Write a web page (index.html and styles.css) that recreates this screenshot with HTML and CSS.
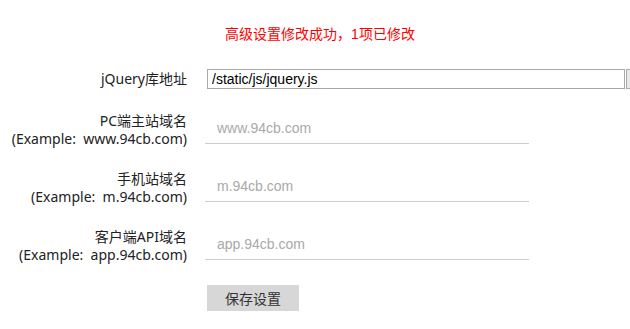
FILE: index.html
```html
<!DOCTYPE html>
<html lang="zh-CN">
<head>
    <meta charset="UTF-8">
    <meta name="viewport" content="width=device-width, initial-scale=1.0">
    <title>高级设置</title>
    <link rel="stylesheet" href="styles.css">
</head>
<body>
    <div class="notice">高级设置修改成功，1项已修改</div>

    <form class="settings-form">
        <div class="form-row single">
            <label class="form-label" for="jqueryUrl">jQuery库地址</label>
            <div class="path-field">
                <input type="text" id="jqueryUrl" class="path-input" value="/static/js/jquery.js">
                <button type="button" class="path-btn" aria-label="选择"></button>
            </div>
        </div>

        <div class="form-row">
            <label class="form-label" for="pcDomain">PC端主站域名<br>(Example:&nbsp; www.94cb.com)</label>
            <input type="text" id="pcDomain" class="line-input" placeholder="www.94cb.com">
        </div>

        <div class="form-row">
            <label class="form-label" for="mDomain">手机站域名<br>(Example:&nbsp; m.94cb.com)</label>
            <input type="text" id="mDomain" class="line-input" placeholder="m.94cb.com">
        </div>

        <div class="form-row">
            <label class="form-label" for="apiDomain">客户端API域名<br>(Example:&nbsp; app.94cb.com)</label>
            <input type="text" id="apiDomain" class="line-input" placeholder="app.94cb.com">
        </div>

        <div class="form-actions">
            <button type="submit" class="save-btn">保存设置</button>
        </div>
    </form>
</body>
</html>
```

FILE: styles.css
```css
* {
    margin: 0;
    padding: 0;
    box-sizing: border-box;
    font-family: 'Liberation Sans', 'Noto Sans CJK SC', sans-serif;
}

html, body {
    overflow: hidden;
}

body {
    background-color: #fff;
    color: #333;
    font-size: 14px;
    line-height: 18px;
}

.notice {
    color: #f00;
    text-align: center;
    padding-top: 25px;
    padding-left: 10px;
}

.settings-form {
    margin-top: 26px;
    width: 700px;
}

.form-row {
    display: flex;
    align-items: flex-start;
    margin-bottom: 22px;
}

.form-row.single {
    margin-bottom: 23px;
}

.form-label {
    width: 187px;
    flex-shrink: 0;
    text-align: right;
    color: #222;
    margin-right: 18px;
    font-family: 'Noto Sans', 'Noto Sans CJK SC', sans-serif;
}

.single .form-label {
    margin-top: 1px;
}

.path-field {
    display: flex;
    margin-left: 2px;
}

.path-input {
    width: 418px;
    height: 20px;
    border: 1px solid #a9a9a9;
    padding: 0 4px;
    font-size: 14px;
    color: #000;
    outline: none;
}

.path-btn {
    position: relative;
    width: 20px;
    height: 20px;
    margin-left: 1px;
    border: 1px solid #a9a9a9;
    background-color: #e9e9e9;
}

.path-btn::before {
    content: "";
    position: absolute;
    left: 3px;
    top: 8px;
    width: 3px;
    height: 2px;
    background-color: #444;
}

.line-input {
    width: 324px;
    height: 30px;
    margin-top: 2px;
    border: none;
    border-bottom: 1px solid #ccc;
    padding: 0 12px 2px;
    font-size: 14px;
    color: #333;
    outline: none;
}

.line-input::placeholder {
    color: #a9a9a9;
}

.form-actions {
    padding-left: 207px;
    margin-top: -1px;
}

.save-btn {
    width: 92px;
    height: 26px;
    border: none;
    background-color: #d6d7d6;
    color: #333;
    font-size: 14px;
    cursor: pointer;
}
```
